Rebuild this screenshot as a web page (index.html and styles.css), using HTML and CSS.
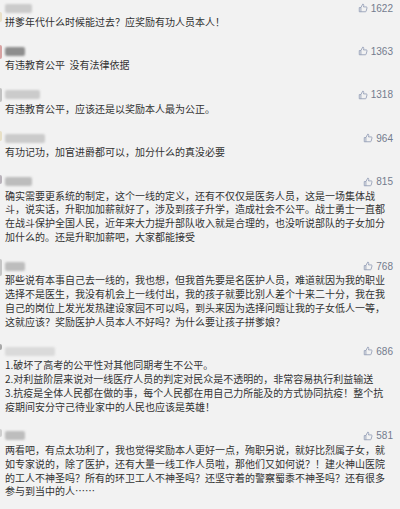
FILE: index.html
```html
<!DOCTYPE html>
<html lang="zh-CN">

<head>
    <meta charset="UTF-8">
    <meta name="viewport" content="width=device-width, initial-scale=1.0">
    <title>评论</title>
    <link rel="stylesheet" href="styles.css">
</head>

<body>
    <svg width="0" height="0" style="position:absolute">
        <symbol id="zan" viewBox="0 0 12 12">
            <path d="M1.5 5.5h2v5h-2z M3.5 5.5 L5.6 1.4 Q7.1 1.2 6.9 2.9 L6.6 4.7 H10 Q11.1 4.9 10.8 6 L9.7 9.9 Q9.5 10.5 8.9 10.5 H3.5" fill="none" stroke="currentColor" stroke-width="0.9" stroke-linejoin="round" />
        </symbol>
    </svg>

    <div class="list">
        <div class="comment">
            <div class="avatar"><span class="av1"></span></div>
            <div class="body">
                <div class="head">
                    <div class="name w27 light"></div>
                    <div class="like"><svg><use href="#zan"></use></svg>1622</div>
                </div>
                <p class="text">拼爹年代什么时候能过去？应奖励有功人员本人！</p>
            </div>
        </div>

        <div class="comment">
            <div class="avatar"><span class="av2"></span></div>
            <div class="body">
                <div class="head">
                    <div class="name w20 dark"></div>
                    <div class="like"><svg><use href="#zan"></use></svg>1363</div>
                </div>
                <p class="text">有违教育公平&nbsp;&nbsp;没有法律依据</p>
            </div>
        </div>

        <div class="comment">
            <div class="avatar"><span class="av3"></span></div>
            <div class="body">
                <div class="head">
                    <div class="name w35 light"></div>
                    <div class="like"><svg><use href="#zan"></use></svg>1318</div>
                </div>
                <p class="text">有违教育公平，应该还是以奖励本人最为公正。</p>
            </div>
        </div>

        <div class="comment">
            <div class="avatar"><span class="av4"></span></div>
            <div class="body">
                <div class="head">
                    <div class="name w40 light"></div>
                    <div class="like"><svg><use href="#zan"></use></svg>964</div>
                </div>
                <p class="text">有功记功，加官进爵都可以，加分什么的真没必要</p>
            </div>
        </div>

        <div class="comment">
            <div class="avatar"><span class="av5"></span></div>
            <div class="body">
                <div class="head">
                    <div class="name w27 mid"></div>
                    <div class="like"><svg><use href="#zan"></use></svg>815</div>
                </div>
                <p class="text">确实需要更系统的制定，这个一线的定义，还有不仅仅是医务人员，这是一场集体战斗，说实话，升职加加薪就好了，涉及到孩子升学，造成社会不公平。战士勇士一直都在战斗保护全国人民，近年来大力提升部队收入就是合理的，也没听说部队的子女加分加什么的。还是升职加薪吧，大家都能接受</p>
            </div>
        </div>

        <div class="comment">
            <div class="avatar"><span class="av6"></span></div>
            <div class="body">
                <div class="head">
                    <div class="name w20 mid"></div>
                    <div class="like"><svg><use href="#zan"></use></svg>768</div>
                </div>
                <p class="text">那些说有本事自己去一线的，我也想，但我首先要是名医护人员，难道就因为我的职业选择不是医生，我没有机会上一线付出，我的孩子就要比别人差个十来二十分，我在我自己的岗位上发光发热建设家园不可以吗，到头来因为选择问题让我的子女低人一等，这就应该？奖励医护人员本人不好吗？为什么要让孩子拼爹娘？</p>
            </div>
        </div>

        <div class="comment">
            <div class="avatar"><span class="av7"></span></div>
            <div class="body">
                <div class="head">
                    <div class="name w50 pale"></div>
                    <div class="like"><svg><use href="#zan"></use></svg>686</div>
                </div>
                <p class="text">1.破坏了高考的公平性对其他同期考生不公平。<br>2.对利益阶层来说对一线医疗人员的判定对民众是不透明的，非常容易执行利益输送<br>3.抗疫是全体人民都在做的事，每个人民都在用自己力所能及的方式协同抗疫！整个抗疫期间安分守己待业家中的人民也应该是英雄！</p>
            </div>
        </div>

        <div class="comment">
            <div class="avatar"><span class="av8"></span></div>
            <div class="body">
                <div class="head">
                    <div class="name w20 mid"></div>
                    <div class="like"><svg><use href="#zan"></use></svg>581</div>
                </div>
                <p class="text">两看吧，有点太功利了，我也觉得奖励本人更好一点，殉职另说，就好比烈属子女，就如专家说的，除了医护，还有大量一线工作人员啦，那他们又如何说？！建火神山医院的工人不神圣吗？所有的环卫工人不神圣吗？还坚守着的警察蜀黍不神圣吗？还有很多参与到当中的人……</p>
            </div>
        </div>
    </div>
</body>

</html>
```

FILE: styles.css
```css
* {
    margin: 0;
    padding: 0;
    box-sizing: border-box;
}

body {
    width: 400px;
    height: 509px;
    overflow: hidden;
    background-color: #f2f2f2;
    font-family: "Noto Sans CJK SC", "Liberation Sans", sans-serif;
    color: #333;
}

.list {
    padding-top: 1px;
}

.comment {
    display: flex;
    padding-bottom: 15.6px;
}

.avatar {
    width: 3px;
    flex: none;
}

.avatar span {
    display: block;
    width: 2px;
    height: 12px;
    border-radius: 0 2px 2px 0;
}

.avatar .av1 {
    margin-top: 11px;
    height: 10px;
    background-color: #e9e0c8;
}

.avatar .av2 {
    margin-top: 1px;
    height: 14px;
    background-color: #d7a2a2;
}

.avatar .av3 {
    height: 14px;
    background-color: #c2c2c2;
}

.avatar .av4 {
    height: 10px;
    background-color: #e8e0c6;
}

.avatar .av5 {
    height: 9px;
    background-color: #b9b2ba;
}

.avatar .av6 {
    height: 17px;
    background-color: #c6c6c6;
}

.avatar .av7 {
    height: 6px;
    background-color: #a8a8a8;
}

.avatar .av8 {
    height: 8px;
    background-color: #cfcfcf;
}

.body {
    flex: 1;
    padding: 0 7px 0 2px;
}

.head {
    height: 14px;
    display: flex;
    justify-content: space-between;
    align-items: center;
}

.name {
    height: 9px;
    border-radius: 2px;
    filter: blur(1.2px);
}

.name.light {
    background-color: #cbcbcb;
}

.name.dark {
    background-color: #8e8e8e;
}

.name.mid {
    background-color: #bdbdbd;
}

.name.pale {
    background-color: #dadada;
}

.w20 {
    width: 20px;
}

.w27 {
    width: 27px;
}

.w35 {
    width: 35px;
}

.w40 {
    width: 40px;
}

.w50 {
    width: 50px;
}

.like {
    display: flex;
    align-items: center;
    gap: 3px;
    font: 10px "Liberation Sans", Arial, sans-serif;
    color: #747c8e;
}

.like svg {
    width: 10px;
    height: 10px;
    color: #8591ad;
}

.text {
    font-size: 10px;
    line-height: 13.8px;
}
```
